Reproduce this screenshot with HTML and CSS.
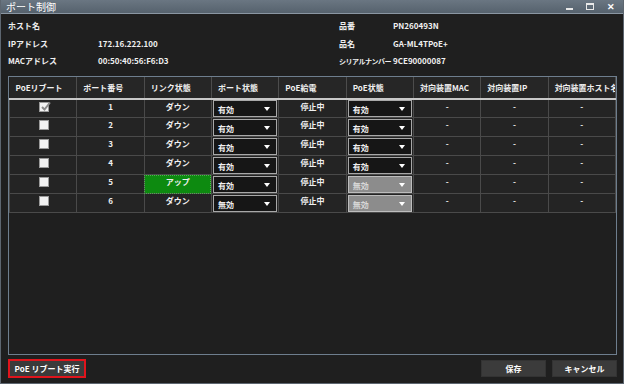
FILE: index.html
```html
<!DOCTYPE html>
<html lang="ja">
<head>
    <meta charset="UTF-8">
    <title>ポート制御</title>
    <link rel="stylesheet" href="styles.css">
</head>
<body>
    <div class="window">
        <div class="titlebar">
            <span class="title">ポート制御</span>
            <div class="controls">
                <span class="ctl ctl-min"></span>
                <span class="ctl ctl-max"></span>
                <span class="ctl ctl-close">✕</span>
            </div>
        </div>

        <div class="content">
            <div class="info">
                <div class="info-col">
                    <div class="info-row"><span class="lbl">ホスト名</span><span class="val"></span></div>
                    <div class="info-row"><span class="lbl">IPアドレス</span><span class="val">172.16.222.100</span></div>
                    <div class="info-row"><span class="lbl">MACアドレス</span><span class="val">00:50:40:56:F6:D3</span></div>
                </div>
                <div class="info-col right">
                    <div class="info-row"><span class="lbl">品番</span><span class="val">PN260493N</span></div>
                    <div class="info-row"><span class="lbl">品名</span><span class="val">GA-ML4TPoE+</span></div>
                    <div class="info-row"><span class="lbl narrow">シリアルナンバー</span><span class="val">9CE90000087</span></div>
                </div>
            </div>

            <div class="table-box">
                <table class="ports">
                    <thead>
                        <tr>
                            <th>PoEリブート</th>
                            <th>ポート番号</th>
                            <th>リンク状態</th>
                            <th>ポート状態</th>
                            <th>PoE給電</th>
                            <th>PoE状態</th>
                            <th>対向装置MAC</th>
                            <th>対向装置IP</th>
                            <th>対向装置ホスト名</th>
                        </tr>
                    </thead>
                    <tbody id="rows"></tbody>
                </table>
            </div>

            <div class="footer">
                <button class="btn btn-reboot">PoE リブート実行</button>
                <div class="footer-right">
                    <button class="btn">保存</button>
                    <button class="btn">キャンセル</button>
                </div>
            </div>
        </div>
    </div>

    <script>
        // ポート一覧
        const ports = [
            { no: 1, link: 'ダウン', port: '有効', poe: '有効', checked: true },
            { no: 2, link: 'ダウン', port: '有効', poe: '有効' },
            { no: 3, link: 'ダウン', port: '有効', poe: '有効' },
            { no: 4, link: 'ダウン', port: '有効', poe: '有効' },
            { no: 5, link: 'アップ', port: '有効', poe: '無効', poeOff: true },
            { no: 6, link: 'ダウン', port: '無効', poe: '無効', poeOff: true }
        ];

        function checkbox(checked) {
            let mark = checked ? '<path d="M3 6 L5.5 8.5 L11 1.5" fill="none" stroke="#8a8a8a" stroke-width="2"/>' : '';
            return '<svg class="chk" width="12" height="11" viewBox="0 0 12 11">' +
                '<rect x="0.5" y="1.5" width="9" height="9" fill="#f2f2f2" stroke="#9a9a9a"/>' + mark + '</svg>';
        }

        function select(text, disabled) {
            return '<div class="sel' + (disabled ? ' disabled' : '') + '"><span>' + text + '</span>' +
                '<svg width="6" height="4" viewBox="0 0 6 4"><path d="M0 0 L6 0 L3 4 Z" fill="currentColor"/></svg></div>';
        }

        const tbody = document.getElementById('rows');
        ports.forEach(p => {
            const tr = document.createElement('tr');
            tr.innerHTML =
                '<td class="c-chk">' + checkbox(p.checked) + '</td>' +
                '<td class="top">' + p.no + '</td>' +
                '<td class="top' + (p.link === 'アップ' ? ' up' : '') + '">' + p.link + '</td>' +
                '<td class="c-sel">' + select(p.port, false) + '</td>' +
                '<td class="top">停止中</td>' +
                '<td class="c-sel">' + select(p.poe, p.poeOff) + '</td>' +
                '<td class="top">-</td>' +
                '<td class="top">-</td>' +
                '<td class="top">-</td>';
            tbody.appendChild(tr);
        });
    </script>
</body>
</html>
```

FILE: styles.css
```css
* {
    box-sizing: border-box;
}

body {
    margin: 0;
    width: 624px;
    height: 384px;
    background-color: #1e1e1e;
    font-family: "Noto Sans CJK JP", "Noto Sans", sans-serif;
    font-size: 8px;
    font-weight: bold;
    color: #f0f0f0;
    overflow: hidden;
}

.window {
    width: 624px;
    height: 384px;
    border: 1px solid #5d6670;
    border-top: none;
    display: flex;
    flex-direction: column;
    background-color: #1f1f1f;
}

.titlebar {
    height: 14px;
    background: linear-gradient(#6a7682, #56626d);
    border-bottom: 1px solid #8a96a2;
    display: flex;
    align-items: center;
    justify-content: space-between;
    padding: 0 6px 0 5px;
}

.title {
    font-size: 10px;
    font-weight: normal;
    color: #ffffff;
    line-height: 14px;
}

.controls {
    display: flex;
    align-items: center;
    gap: 12px;
    padding-right: 2px;
}

.ctl {
    width: 9px;
    height: 8px;
    display: flex;
    align-items: center;
    justify-content: center;
    color: #ffffff;
}

.ctl-min::after {
    content: "";
    width: 7px;
    height: 2px;
    margin-top: 4px;
    background-color: #e8e8e8;
}

.ctl-max {
    width: 8px;
    height: 7px;
    border: 1px solid #e8e8e8;
    border-top-width: 2px;
}

.ctl-close {
    font-size: 9px;
    line-height: 8px;
}

.content {
    flex: 1;
    padding: 3px 6px 0 7px;
    display: flex;
    flex-direction: column;
}

.info {
    display: flex;
}

.info-col {
    width: 331px;
}

.info-col.right {
    flex: 1;
}

.info-row {
    display: flex;
    height: 17.5px;
    align-items: center;
    white-space: nowrap;
}

.lbl {
    width: 90px;
}

.info-col.right .lbl {
    width: 54px;
}

.lbl.narrow {
    font-size: 7px;
    letter-spacing: -0.5px;
}

.table-box {
    margin-top: 6px;
    height: 279px;
    border: 1px solid #6e7e8e;
    background-color: #1f1f1f;
}

.ports {
    width: 100%;
    table-layout: fixed;
    border-collapse: collapse;
}

.ports th {
    height: 22px;
    background-color: #262626;
    border-right: 1px solid #4c4c4c;
    border-bottom: 2px solid #c8c8c8;
    text-align: left;
    padding: 0 0 0 6px;
    white-space: nowrap;
    overflow: hidden;
    font-weight: bold;
}

.ports td {
    height: 19px;
    background-color: #242424;
    border: 1px solid #4a4a4a;
    text-align: center;
    padding: 0;
}

.ports td.top {
    vertical-align: top;
    padding-top: 1px;
}

.ports td.up {
    background-color: #0d8a10;
    outline: 1px dotted #4fb04f;
    outline-offset: -1px;
}

.c-chk {
    vertical-align: top;
}

.chk {
    display: block;
    margin: 1px auto 0 29px;
}

.sel {
    height: 17px;
    margin: 0 1px;
    border: 1px solid #a8a8a8;
    background-color: #161616;
    display: flex;
    align-items: center;
    justify-content: space-between;
    padding: 2px 6px 0 4px;
    color: #f0f0f0;
}

.sel svg {
    color: #ffffff;
}

.sel.disabled {
    background-color: #8c8c8c;
    border-color: #bdbdbd;
    color: #d8d8d8;
}

.footer {
    display: flex;
    justify-content: space-between;
    align-items: center;
    margin-top: 4px;
}

.btn {
    font-family: inherit;
    font-size: 8px;
    font-weight: bold;
    color: #ffffff;
    background-color: #3b3b3b;
    border: 1px solid #333333;
    height: 17px;
    width: 65px;
    padding: 0;
}

.btn-reboot {
    width: 78px;
    height: 19px;
    border: 2px solid #e0141c;
}

.footer-right {
    display: flex;
    gap: 6px;
}
```
